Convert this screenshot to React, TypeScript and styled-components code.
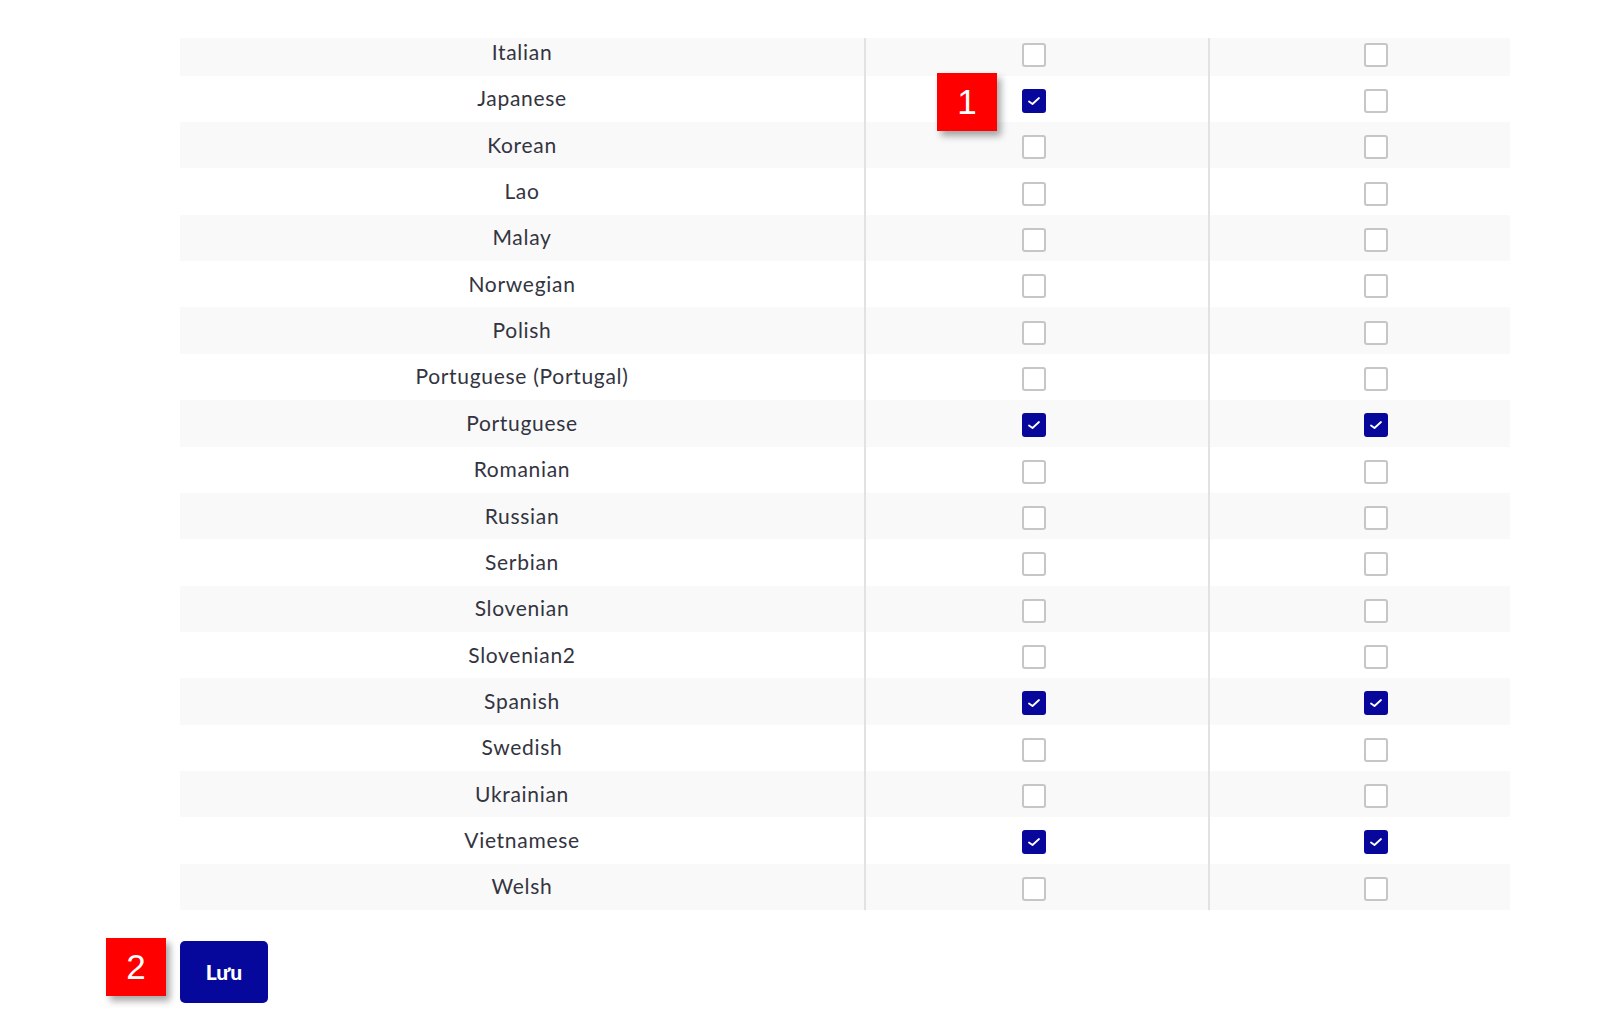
import React from 'react';
import styled, { createGlobalStyle } from 'styled-components';

const GlobalStyle = createGlobalStyle`
  html, body { margin: 0; padding: 0; background: #ffffff; }
  body { font-family: Lato, "Noto Sans", sans-serif; }
`;

const Page = styled.div`
  position: relative;
  width: 1607px;
  height: 1019px;
  overflow: hidden;
  box-sizing: border-box;
  padding: 38px 0 0 180px;
`;

const TableViewport = styled.div`
  width: 1330px;
  overflow: hidden;
`;

const Table = styled.div`
  display: flex;
  flex-direction: column;
  margin-top: -8.6px;
`;

const Row = styled.div<{ $striped: boolean }>`
  display: grid;
  grid-template-columns: 684px 344px 302px;
  height: 46.35px;
  background: ${(p) => (p.$striped ? '#f9f9f9' : '#ffffff')};
`;

const NameCell = styled.div`
  display: flex;
  align-items: center;
  justify-content: center;
  padding-bottom: 2px;
  font-size: 21px;
  color: #33343f;
  letter-spacing: 0.7px;
`;

const CheckCell = styled.div<{ $inset: number }>`
  display: flex;
  align-items: center;
  padding-left: ${(p) => p.$inset}px;
  border-left: 2px solid #e2e2e2;
  box-sizing: border-box;
`;

const Box = styled.span<{ $checked: boolean }>`
  display: inline-flex;
  align-items: center;
  justify-content: center;
  width: 24px;
  height: 24px;
  box-sizing: border-box;
  margin-top: 4px;
  border-radius: 3px;
  border: 2px solid ${(p) => (p.$checked ? '#07089b' : '#c6c6c6')};
  background: ${(p) => (p.$checked ? '#07089b' : '#ffffff')};
`;

const SaveButton = styled.button`
  margin-top: 31px;
  width: 88px;
  height: 62px;
  border: none;
  border-radius: 5px;
  background: #06089b;
  color: #ffffff;
  font-family: Lato, "Noto Sans", sans-serif;
  font-weight: 900;
  font-size: 21px;
  cursor: pointer;
`;

const Badge = styled.div<{ $left: number; $top: number }>`
  position: absolute;
  left: ${(p) => p.$left}px;
  top: ${(p) => p.$top}px;
  width: 60px;
  height: 58px;
  background: #ff0000;
  color: #ffffff;
  display: flex;
  align-items: center;
  justify-content: center;
  font-family: "Liberation Sans", Arial, sans-serif;
  font-size: 35px;
  box-shadow: 4px 5px 7px rgba(0, 0, 0, 0.35);
`;

const Checkbox: React.FC<{ checked: boolean }> = ({ checked }) => (
  <Box $checked={checked} role="checkbox" aria-checked={checked}>
    {checked && (
      <svg width="16" height="16" viewBox="0 0 16 16" fill="none">
        <polyline points="3,8.5 6.5,11 13,5" stroke="#ffffff" strokeWidth="1.8" strokeLinecap="round" strokeLinejoin="round" />
      </svg>
    )}
  </Box>
);

const languages: [string, boolean, boolean][] = [
  ['Italian', false, false],
  ['Japanese', true, false],
  ['Korean', false, false],
  ['Lao', false, false],
  ['Malay', false, false],
  ['Norwegian', false, false],
  ['Polish', false, false],
  ['Portuguese (Portugal)', false, false],
  ['Portuguese', true, true],
  ['Romanian', false, false],
  ['Russian', false, false],
  ['Serbian', false, false],
  ['Slovenian', false, false],
  ['Slovenian2', false, false],
  ['Spanish', true, true],
  ['Swedish', false, false],
  ['Ukrainian', false, false],
  ['Vietnamese', true, true],
  ['Welsh', false, false],
];

export default function App() {
  return (
    <Page>
      <GlobalStyle />
      <TableViewport>
        <Table>
          {languages.map(([name, a, b], i) => (
            <Row key={name} $striped={i % 2 === 0}>
              <NameCell>{name}</NameCell>
              <CheckCell $inset={156}>
                <Checkbox checked={a} />
              </CheckCell>
              <CheckCell $inset={154}>
                <Checkbox checked={b} />
              </CheckCell>
            </Row>
          ))}
        </Table>
      </TableViewport>
      <SaveButton>Lưu</SaveButton>
      <Badge $left={937} $top={73}>1</Badge>
      <Badge $left={106} $top={938}>2</Badge>
    </Page>
  );
}
